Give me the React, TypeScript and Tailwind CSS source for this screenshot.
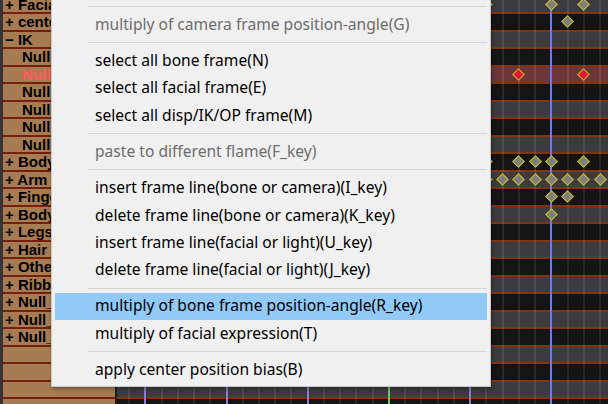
import React from "react";

type Bone = { label: string; indent?: boolean; selected?: boolean };

const bones: Bone[] = [
  { label: "+ Facial" },
  { label: "+ center" },
  { label: "\u2212 IK" },
  { label: "Null", indent: true },
  { label: "Null", indent: true, selected: true },
  { label: "Null", indent: true },
  { label: "Null", indent: true },
  { label: "Null", indent: true },
  { label: "Null", indent: true },
  { label: "+ Body" },
  { label: "+ Arm" },
  { label: "+ Finger" },
  { label: "+ Body" },
  { label: "+ Legs" },
  { label: "+ Hair" },
  { label: "+ Other" },
  { label: "+ Ribbon" },
  { label: "+ Null_" },
  { label: "+ Null_" },
  { label: "+ Null_" },
  { label: "" },
  { label: "" },
  { label: "" },
  { label: "" },
];

const ROW_H = 17.5;
const CELL = 16.24;
const ANCHOR = 435.3; // x of current frame line inside timeline

const keys: { row: number; n: number; red?: boolean }[] = [
  { row: 0, n: 4 },
  { row: 0, n: 0 },
  { row: 0, n: -2 },
  { row: 1, n: -1 },
  { row: 4, n: 2, red: true },
  { row: 4, n: -2, red: true },
  { row: 9, n: 4 },
  { row: 9, n: 2 },
  { row: 9, n: 1 },
  { row: 9, n: 0 },
  { row: 9, n: -2 },
  { row: 10, n: 4 },
  { row: 10, n: 3 },
  { row: 10, n: 2 },
  { row: 10, n: 1 },
  { row: 10, n: 0 },
  { row: 10, n: -1 },
  { row: 10, n: -2 },
  { row: 10, n: -3 },
  { row: 11, n: 0 },
  { row: 11, n: -1 },
  { row: 12, n: 0 },
];

type Item =
  | { kind: "sep" }
  | { kind: "item"; text: string; disabled?: boolean; hot?: boolean };

const S: Item = { kind: "sep" };
const menu: Item[] = [
  S,
  { kind: "item", text: "multiply of camera frame position-angle(G)", disabled: true },
  S,
  { kind: "item", text: "select all bone frame(N)" },
  { kind: "item", text: "select all facial frame(E)" },
  { kind: "item", text: "select all disp/IK/OP frame(M)" },
  S,
  { kind: "item", text: "paste to different flame(F_key)", disabled: true },
  S,
  { kind: "item", text: "insert frame line(bone or camera)(I_key)" },
  { kind: "item", text: "delete frame line(bone or camera)(K_key)" },
  { kind: "item", text: "insert frame line(facial or light)(U_key)" },
  { kind: "item", text: "delete frame line(facial or light)(J_key)" },
  S,
  { kind: "item", text: "multiply of bone frame position-angle(R_key)", hot: true },
  { kind: "item", text: "multiply of facial expression(T)" },
  S,
  { kind: "item", text: "apply center position bias(B)" },
];

function Diamond({ red }: { red?: boolean }) {
  return (
    <div
      className={
        "w-[9px] h-[9px] rotate-45 border border-[#c9c21a] " +
        (red ? "bg-[#e3123c]" : "bg-[#7e7e7e]")
      }
    />
  );
}

export default function App() {
  const gridLines: number[] = [];
  for (let n = -3; n <= 26; n++) gridLines.push(n);

  return (
    <div className="relative w-[608px] h-[404px] overflow-hidden bg-[#141414] flex">
      {/* left dark strip */}
      <div className="w-[3px] h-full bg-[#363636] shrink-0" />

      {/* bone list */}
      <div className="w-[112px] h-full overflow-hidden bg-[#a87c53] shrink-0">
        <div className="-mt-[3.5px] flex flex-col">
          {bones.map((b, i) => (
            <div
              key={i}
              className="h-[17.5px] shrink-0 border-b-2 border-[#75200f] flex items-center whitespace-nowrap overflow-hidden"
            >
              <span
                className={
                  "font-['Liberation_Sans',Arial,sans-serif] font-bold text-[15px] leading-none " +
                  (b.indent ? "pl-[19px] " : "pl-[2px] ") +
                  (b.selected ? "text-[#ff5a5a]" : "text-black")
                }
              >
                {b.label}
              </span>
            </div>
          ))}
        </div>
      </div>

      {/* timeline */}
      <div className="relative flex-1 h-full overflow-hidden border-l-2 border-[#1e1e1e]">
        <div className="-mt-[3.5px] flex flex-col">
          {bones.map((_, i) => (
            <div
              key={i}
              className={
                "h-[17.5px] shrink-0 border-b-2 border-[#80350f] " +
                (i === 4 ? "bg-[#6b363a]" : i % 2 === 0 ? "bg-[#3c3c3f]" : "bg-[#141414]")
              }
            />
          ))}
        </div>

        {/* vertical grid lines */}
        {gridLines.map((n) => {
          const x = ANCHOR - CELL * n - 2;
          const major = n % 5 === 0;
          let cls = "absolute top-0 bottom-0 w-[2px] bg-[rgba(255,255,255,0.09)]";
          if (major && n === 0) cls = "absolute top-0 bottom-0 w-[2px] bg-[#7373ff]";
          else if (major && n === 10) cls = "absolute top-0 bottom-0 w-[2px] bg-[#6fc46f]";
          else if (major) cls = "absolute top-0 bottom-0 w-[2px] bg-[#8a7fd6]";
          return <div key={n} className={cls} style={{ left: x }} />;
        })}

        {/* key frames */}
        {keys.map((k, i) => (
          <div
            key={i}
            className="absolute"
            style={{
              left: ANCHOR - CELL * k.n - 1 - 6.5,
              top: -3.5 + ROW_H * k.row + ROW_H / 2 - 1 - 6.5,
            }}
          >
            <div className="w-[13px] h-[13px] flex items-center justify-center">
              <Diamond red={k.red} />
            </div>
          </div>
        ))}
      </div>

      {/* context menu */}
      <div className="absolute left-[51px] top-0 w-[440px] bg-[#f0f0f0] border-x border-b border-[#c8c8c8] pt-[1.85px] pb-[2.5px] shadow-[1px_2px_4px_rgba(0,0,0,0.35)] font-['Noto_Sans',sans-serif] text-[15.6px]">
        {menu.map((m, i) =>
          m.kind === "sep" ? (
            <div key={i} className="h-[9px] pt-[4px] ml-[36px] mr-[3px]">
              <div className="h-px bg-[#d5d5d5]" />
            </div>
          ) : (
            <div
              key={i}
              className={
                "h-[27.3px] mx-[3px] pl-[40px] flex items-center whitespace-nowrap " +
                (m.hot ? "bg-[#91c9f7] " : "") +
                (m.disabled ? "text-[#6d6d6d]" : "text-black")
              }
            >
              {m.text}
            </div>
          )
        )}
      </div>
    </div>
  );
}
